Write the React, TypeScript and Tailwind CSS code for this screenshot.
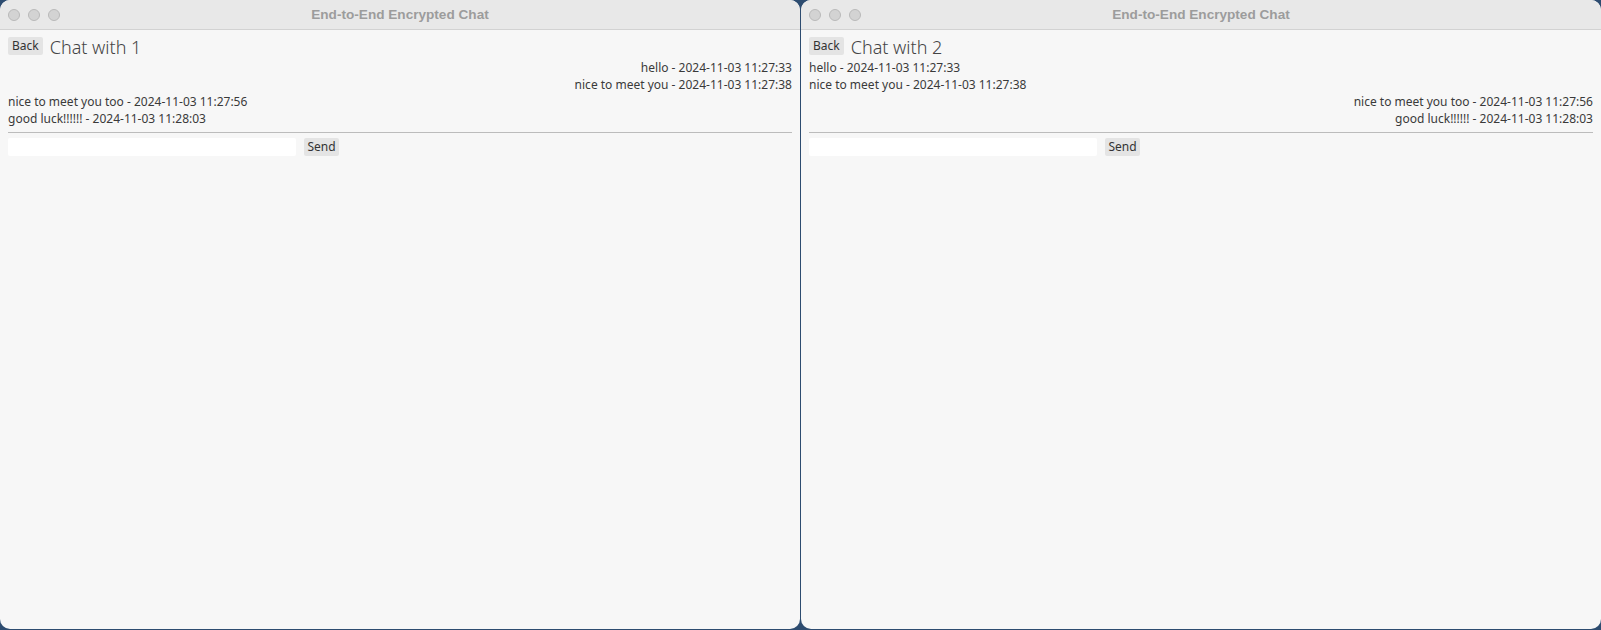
import React from 'react';

type Message = { text: string; time: string; mine: boolean };

const history = [
  { text: 'hello', time: '2024-11-03 11:27:33', from: 2 },
  { text: 'nice to meet you', time: '2024-11-03 11:27:38', from: 2 },
  { text: 'nice to meet you too', time: '2024-11-03 11:27:56', from: 1 },
  { text: 'good luck!!!!!!', time: '2024-11-03 11:28:03', from: 1 },
];

const font = { fontFamily: '"Noto Sans", "Open Sans", sans-serif' };

function TitleBar() {
  return (
    <div className="grid h-[30px] shrink-0 grid-cols-[1fr_auto_1fr] items-center border-b border-[#d2d2d2] bg-[#e8e8e8]">
      <div className="flex gap-2 pl-2 pt-px">
        <span className="h-3 w-3 rounded-full border border-[#b9b9b9] bg-[#d3d3d3]" />
        <span className="h-3 w-3 rounded-full border border-[#b9b9b9] bg-[#d3d3d3]" />
        <span className="h-3 w-3 rounded-full border border-[#b9b9b9] bg-[#d3d3d3]" />
      </div>
      <div className="pt-px text-[13.6px] font-bold text-[#9c9c9c]" style={{ fontFamily: '"Liberation Sans", Arial, sans-serif' }}>
        End-to-End Encrypted Chat
      </div>
      <div />
    </div>
  );
}

function ChatWindow({ peer, me }: { peer: number; me: number }) {
  const messages: Message[] = history.map((m) => ({ text: m.text, time: m.time, mine: m.from === me }));

  return (
    <div className="flex h-[629px] w-[800px] flex-col overflow-hidden rounded-[10px] bg-[#f7f7f7]">
      <TitleBar />
      <div className="flex flex-col px-2 text-[#3a3a3a]" style={font}>
        <div className="mt-[6px] flex h-[20px] items-center gap-[7px]">
          <button className="h-[18px] rounded-[2px] bg-[#e4e4e4] px-[4px] text-[12px] leading-[18px] text-[#333]">Back</button>
          <h1 className="pt-[2px] text-[18px] font-light leading-[20px] text-[#444]">Chat with {peer}</h1>
        </div>
        <div className="mt-[3px] flex flex-col text-[12px] leading-[17px]">
          {messages.map((m, i) => (
            <div key={i} className={m.mine ? 'text-right' : 'text-left'}>
              {m.text} - {m.time}
            </div>
          ))}
        </div>
        <div className="mt-[5px] border-t border-[#bcbcbc]" />
        <div className="mt-[5px] flex items-center gap-2">
          <input className="h-[18px] w-[288px] rounded-[2px] bg-white outline-none" />
          <button className="h-[18px] w-[35px] rounded-[2px] bg-[#e4e4e4] text-[12px] leading-[18px] text-[#333]">Send</button>
        </div>
      </div>
    </div>
  );
}

export default function App() {
  return (
    <div className="flex h-[630px] w-[1601px] items-start gap-px overflow-hidden bg-[#2d4c70]">
      <ChatWindow peer={1} me={2} />
      <ChatWindow peer={2} me={1} />
    </div>
  );
}
